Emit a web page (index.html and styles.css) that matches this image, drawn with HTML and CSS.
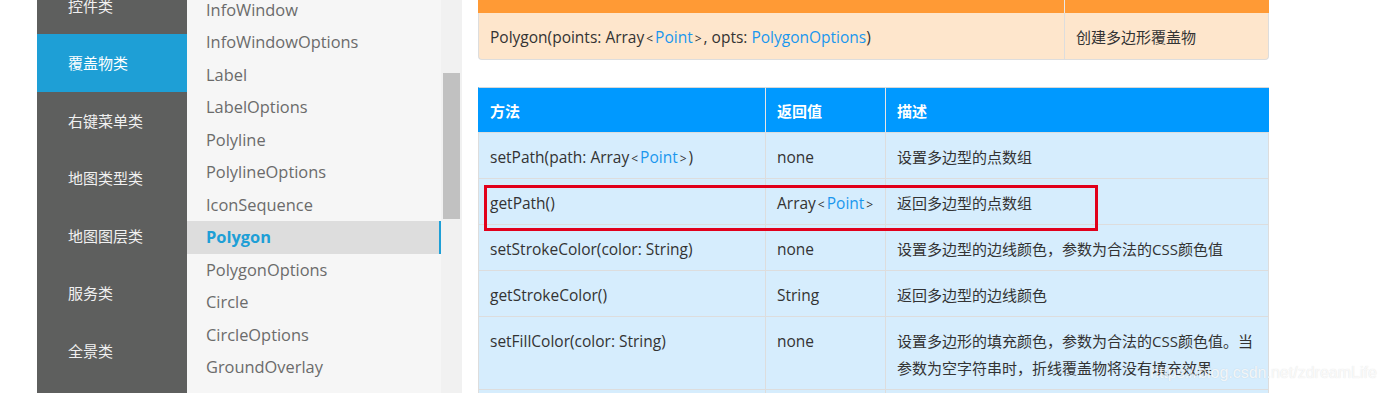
FILE: index.html
```html
<!DOCTYPE html>
<html lang="zh-CN">
<head>
<meta charset="utf-8">
<title>Polygon</title>
<link rel="stylesheet" href="styles.css">
</head>
<body>
<div class="page">
  <div class="gutter"></div>
  <nav class="cats">
    <div class="cats-inner">
      <div class="cat">控件类</div>
      <div class="cat active">覆盖物类</div>
      <div class="cat">右键菜单类</div>
      <div class="cat">地图类型类</div>
      <div class="cat">地图图层类</div>
      <div class="cat">服务类</div>
      <div class="cat">全景类</div>
    </div>
  </nav>
  <div class="classes">
    <ul class="class-list">
      <li>InfoWindow</li>
      <li>InfoWindowOptions</li>
      <li>Label</li>
      <li>LabelOptions</li>
      <li>Polyline</li>
      <li>PolylineOptions</li>
      <li>IconSequence</li>
      <li class="active">Polygon</li>
      <li>PolygonOptions</li>
      <li>Circle</li>
      <li>CircleOptions</li>
      <li>GroundOverlay</li>
    </ul>
    <div class="scroll-track">
      <div class="scroll-gap"></div>
      <div class="scroll-thumb"></div>
    </div>
  </div>
  <main class="main">
    <table class="tbl ctor">
      <colgroup><col class="c-ctor"><col class="c-desc2"></colgroup>
      <thead><tr><th></th><th></th></tr></thead>
      <tbody>
        <tr><td>Polygon(points: Array<span class="lt">&lt;</span><a>Point</a><span class="lt">&gt;</span>, opts: <a>PolygonOptions</a>)</td><td class="zh">创建多边形覆盖物</td></tr>
      </tbody>
    </table>
    <table class="tbl methods">
      <colgroup><col class="c-m"><col class="c-r"><col class="c-d"></colgroup>
      <thead><tr><th>方法</th><th>返回值</th><th>描述</th></tr></thead>
      <tbody>
        <tr><td>setPath(path: Array<span class="lt">&lt;</span><a>Point</a><span class="lt">&gt;</span>)</td><td>none</td><td class="zh">设置多边型的点数组</td></tr>
        <tr><td>getPath()</td><td>Array<span class="lt">&lt;</span><a>Point</a><span class="lt">&gt;</span></td><td class="zh">返回多边型的点数组</td></tr>
        <tr><td>setStrokeColor(color: String)</td><td>none</td><td class="zh">设置多边型的边线颜色，参数为合法的CSS颜色值</td></tr>
        <tr><td>getStrokeColor()</td><td>String</td><td class="zh">返回多边型的边线颜色</td></tr>
        <tr><td>setFillColor(color: String)</td><td>none</td><td class="zh">设置多边形的填充颜色，参数为合法的CSS颜色值。当参数为空字符串时，折线覆盖物将没有填充效果</td></tr>
        <tr><td>getFillColor()</td><td>String</td><td class="zh">返回多边形的填充颜色</td></tr>
      </tbody>
    </table>
    <div class="mark"></div>
  </main>
</div>
<div class="watermark">https://blog.csdn.net/zdreamLife</div>
</body>
</html>
```
FILE: styles.css
```css
* { box-sizing: border-box; }
html, body { margin: 0; padding: 0; }
body {
  width: 1383px;
  height: 393px;
  overflow: hidden;
  background: #fff;
  font-family: "Open Sans", "Noto Sans CJK SC", sans-serif;
  position: relative;
}
.page {
  display: flex;
  height: 393px;
}
.gutter { width: 37px; flex: none; }
.cats {
  width: 150px;
  flex: none;
  background: #5e5f5e;
  overflow: hidden;
}
.cats-inner { margin-top: -23.5px; }
.cat {
  height: 57.5px;
  display: flex;
  align-items: center;
  padding-left: 31px;
  color: #f0f0f0;
  font-family: "Noto Sans CJK SC", sans-serif;
  font-size: 15px;
}
.cat.active { background: #1e9fd6; color: #fff; }

.classes {
  width: 275px;
  flex: none;
  display: flex;
  background: #f6f6f6;
  overflow: hidden;
}
.class-list {
  list-style: none;
  margin: -6.5px 0 0 0;
  padding: 0;
  width: 254px;
  flex: none;
}
.class-list li {
  height: 32.5px;
  line-height: 32.5px;
  padding-left: 19px;
  font-size: 16.4px;
  color: #6b6b6b;
}
.class-list li.active {
  background: #dddddd;
  color: #1e9fd6;
  font-weight: 700;
  border-right: 2px solid #1e9fd6;
}
.scroll-track {
  width: 21px;
  flex: none;
  background: #f1f1f1;
  display: flex;
  flex-direction: column;
  padding: 0 2px 0 2px;
}
.scroll-gap { height: 73px; }
.scroll-thumb { height: 146px; background: #c1c1c1; }

.main {
  flex: none;
  width: 791px;
  margin-left: 16px;
  display: flex;
  flex-direction: column;
  gap: 27px;
  position: relative;
}
.tbl {
  width: 791px;
  border-collapse: separate;
  border-spacing: 0;
  table-layout: fixed;
  font-size: 15.5px;
  color: #333;
}
.tbl a { color: #1a97ee; text-decoration: none; }
.tbl .lt { font-size: 12px; padding: 0 2px; }
.tbl td {
  padding: 9px 11px 9px 11px;
  line-height: 27px;
  vertical-align: top;
  border-top: 1px solid #dddddd;
  border-left: 1px solid #dddddd;
}
.tbl td.zh { font-size: 15px; }
.tbl td > * { line-height: 1; }
.tbl td:first-child { border-left: 1px solid #dddddd; }
.tbl tr td:last-child { border-right: 1px solid #dddddd; }

.ctor .c-ctor { width: 586px; }
.ctor th {
  height: 13px;
  padding: 0;
  background: #ff9a35;
  border-left: 1px solid #e8e8e8;
}
.ctor th:first-child { border-left: 1px solid #ff9a35; }
.ctor td {
  background: #fee6cc;
  border-top: none;
  border-bottom: 1px solid #dddddd;
  padding-top: 11px;
  padding-bottom: 8px;
}
.ctor tr td:first-child { border-bottom-left-radius: 4px; }
.ctor tr td:last-child { border-bottom-right-radius: 4px; }

.methods .c-m { width: 287px; }
.methods .c-r { width: 120px; }
.methods th {
  height: 45px;
  background: #0099ff;
  color: #fff;
  text-align: left;
  font-weight: 700;
  font-size: 15px;
  padding: 0 11px;
  border-top: 1px solid #d8d8d8;
  border-left: 1px solid #e6e6e6;
}
.methods th:first-child { border-left: 1px solid #0099ff; }
.methods td { background: #d6edfd; }
.methods tbody tr { height: 46px; }
.methods tbody tr td { padding-top: 11px; padding-bottom: 7px; }

.mark {
  position: absolute;
  left: 6px;
  top: 185px;
  width: 614px;
  height: 46px;
  border: 3px solid #e1001b;
  pointer-events: none;
}
.watermark {
  position: absolute;
  left: 1150px;
  top: 364px;
  font-family: "Liberation Sans", Arial, sans-serif;
  font-size: 16px;
  color: rgba(255, 255, 255, 0.8);
  text-shadow: 0 0 1px rgba(120, 120, 120, 0.25);
}
```
